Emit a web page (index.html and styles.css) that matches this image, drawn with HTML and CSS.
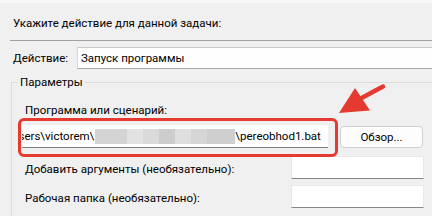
FILE: index.html
```html
<!DOCTYPE html>
<html lang="ru">
<head>
<meta charset="utf-8">
<title>Действие</title>
<link rel="stylesheet" href="styles.css">
</head>
<body>
<div class="page">
  <div class="topband"></div>
  <div class="heading">Укажите действие для данной задачи:</div>
  <div class="sep"></div>
  <div class="action-row">
    <div class="action-label">Действие:</div>
    <div class="combo">Запуск программы</div>
  </div>
  <div class="group">
    <div class="legend">Параметры</div>
    <div class="glabel">Программа или сценарий:</div>
    <div class="prog-row">
      <div class="path-field">
        <span class="path-start">Users\victorem\</span>
        <span class="blur">
          <span class="b b1"></span><span class="b b2"></span><span class="b b3"></span><span class="b b4"></span><span class="b b5"></span><span class="b b6"></span><span class="b b7"></span>
        </span>
        <span class="path-end">\pereobhod1.bat</span>
      </div>
      <div class="browse">Обзор...</div>
      <div class="highlight"></div>
    </div>
    <div class="opt-row first">
      <div class="opt-label">Добавить аргументы (необязательно):</div>
      <div class="opt-field"></div>
    </div>
    <div class="opt-row second">
      <div class="opt-label">Рабочая папка (необязательно):</div>
      <div class="opt-field"></div>
    </div>
  </div>
  <svg class="arrow" width="60" height="40" viewBox="330 80 60 40" aria-hidden="true">
    <line x1="383" y1="86.5" x2="356" y2="101" stroke="#e53a2f" stroke-width="4.5" stroke-linecap="round"/>
    <polygon points="355,88 339,113 370,110.5" fill="#e53a2f"/>
  </svg>
</div>
</body>
</html>
```
FILE: styles.css
```css
html, body {
  margin: 0;
  padding: 0;
}
body {
  background: #f0f0f0;
  font-family: Roboto, "Liberation Sans", sans-serif;
  font-size: 11.5px;
  color: #000;
}
.page {
  position: relative;
  width: 432px;
  height: 216px;
  overflow: hidden;
}
.topband {
  height: 3px;
  background: #f6f6f6;
}
.heading {
  margin: 12px 0 0 13px;
  line-height: 16px;
  height: 16px;
  white-space: nowrap;
}
.sep {
  margin: 9px 0 0 10px;
  border-top: 1px solid #a0a0a0;
}
.action-row {
  display: flex;
  align-items: center;
  margin-top: 6px;
  height: 22px;
}
.action-label {
  width: 64px;
  padding-left: 13px;
  line-height: 16px;
  flex: none;
}
.combo {
  flex: 1;
  height: 20px;
  margin-right: -20px;
  background: #fefefe;
  border-top: 1px solid #c9c9c9;
  border-left: 1px solid #d6d6d6;
  border-bottom: 1px solid #a6a6a6;
  padding-left: 3px;
  line-height: 20px;
  white-space: nowrap;
}
.group {
  position: relative;
  margin: 13px -20px 0 11px;
  border: 1px solid #dcdcdc;
  height: 200px;
}
.legend {
  position: absolute;
  left: 6px;
  top: -9px;
  padding: 0 2px;
  background: #f0f0f0;
  line-height: 16px;
}
.glabel {
  margin: 20px 0 0 13px;
  line-height: 14px;
  height: 14px;
  white-space: nowrap;
}
.prog-row {
  position: relative;
  display: flex;
  align-items: flex-start;
  margin-top: 8px;
  padding-left: 10px;
}
.path-field {
  display: flex;
  align-items: center;
  width: 306px;
  height: 22px;
  background: #fff;
  border-bottom: 1px solid #7c7c7c;
  overflow: hidden;
  white-space: nowrap;
}
.path-start {
  margin-left: -11px;
  line-height: 16px;
}
.blur {
  display: flex;
  height: 15px;
  margin-left: 1px;
}
.b { display: block; height: 15px; }
.b1 { width: 32px; background: #d4d4d4; }
.b2 { width: 16px; background: #e2e2e2; }
.b3 { width: 16px; background: #dadada; }
.b4 { width: 16px; background: #cdcdcd; }
.b5 { width: 16px; background: #dfdfdf; }
.b6 { width: 16px; background: #d6d6d6; }
.b7 { width: 28px; background: #cfcfcf; }
.path-end {
  line-height: 16px;
}
.browse {
  flex: none;
  box-sizing: border-box;
  width: 83px;
  height: 22px;
  margin: 1px 0 0 12px;
  border: 1px solid #d0d0d0;
  border-radius: 4px;
  background: #fdfdfd;
  text-align: center;
  line-height: 20px;
}
.highlight {
  position: absolute;
  left: 6px;
  top: -7px;
  width: 314px;
  height: 33px;
  border: 3px solid #e53a2f;
  border-radius: 6px;
}
.opt-row {
  display: flex;
  align-items: center;
  padding-left: 13px;
}
.opt-row.first { margin-top: 8px; }
.opt-row.second { margin-top: 6px; }
.opt-label {
  width: 266px;
  flex: none;
  line-height: 16px;
  padding-top: 2px;
  white-space: nowrap;
}
.opt-field {
  box-sizing: border-box;
  width: 133px;
  height: 23px;
  background: #fff;
  border: 1px solid #e8e8e8;
  border-bottom-color: #878787;
}
.arrow {
  position: absolute;
  left: 330px;
  top: 80px;
}
```
